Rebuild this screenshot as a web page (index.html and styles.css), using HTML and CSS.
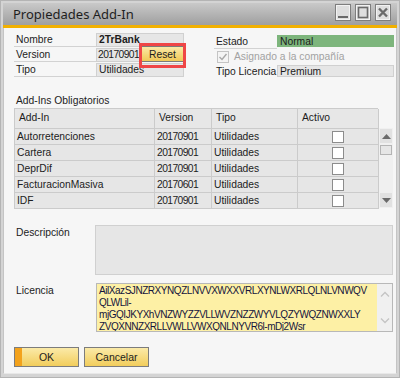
FILE: index.html
```html
<!DOCTYPE html>
<html lang="es">
<head>
    <meta charset="UTF-8">
    <meta name="viewport" content="width=device-width, initial-scale=1.0">
    <title>Propiedades Add-In</title>
    <link rel="stylesheet" href="styles.css">
</head>
<body>
    <div class="window">
        <div class="titlebar">
            <span class="title">Propiedades Add-In</span>
            <div class="win-buttons">
                <div class="win-btn"><svg width="14" height="15" viewBox="0 0 14 15"><rect x="2" y="11" width="10" height="2" fill="#6a6a6a"/></svg></div>
                <div class="win-btn"><svg width="14" height="15" viewBox="0 0 14 15"><rect x="2.5" y="2.5" width="9" height="10" fill="none" stroke="#6a6a6a" stroke-width="1.6"/></svg></div>
                <div class="win-btn"><svg width="14" height="15" viewBox="0 0 14 15"><path d="M3 3.5 L11 11.5 M11 3.5 L3 11.5" stroke="#6a6a6a" stroke-width="2.4"/></svg></div>
            </div>
        </div>

        <div class="content">
            <div class="head">
                <div class="head-left">
                    <div class="row">
                        <span class="lbl">Nombre</span>
                        <span class="field bold">2TrBank</span>
                    </div>
                    <div class="row">
                        <span class="lbl">Version</span>
                        <span class="field short num">20170901</span>
                        <button class="reset-btn">Reset</button>
                    </div>
                    <div class="row">
                        <span class="lbl">Tipo</span>
                        <span class="field">Utilidades</span>
                    </div>
                </div>
                <div class="head-right">
                    <div class="row">
                        <span class="lbl r">Estado</span>
                        <span class="field wide green">Normal</span>
                    </div>
                    <div class="row check-row">
                        <span class="checkbox disabled">
                            <svg width="10" height="10" viewBox="0 0 10 10"><path d="M1.5 5 L4 7.5 L8.5 2" fill="none" stroke="#a8a8a8" stroke-width="1.4"/></svg>
                        </span>
                        <span class="muted">Asignado a la compañía</span>
                    </div>
                    <div class="row">
                        <span class="lbl r plain">Tipo Licencia</span>
                        <span class="field wide">Premium</span>
                    </div>
                </div>
            </div>

            <div class="section-label">Add-Ins Obligatorios</div>

            <div class="grid-wrap">
                <div class="grid">
                    <div class="grid-row header">
                        <div class="cell">Add-In</div>
                        <div class="cell">Version</div>
                        <div class="cell">Tipo</div>
                        <div class="cell">Activo</div>
                    </div>
                    <div class="grid-row">
                        <div class="cell">Autorretenciones</div>
                        <div class="cell num">20170901</div>
                        <div class="cell">Utilidades</div>
                        <div class="cell center"><span class="box"></span></div>
                    </div>
                    <div class="grid-row">
                        <div class="cell">Cartera</div>
                        <div class="cell num">20170901</div>
                        <div class="cell">Utilidades</div>
                        <div class="cell center"><span class="box"></span></div>
                    </div>
                    <div class="grid-row">
                        <div class="cell">DeprDif</div>
                        <div class="cell num">20170901</div>
                        <div class="cell">Utilidades</div>
                        <div class="cell center"><span class="box"></span></div>
                    </div>
                    <div class="grid-row">
                        <div class="cell">FacturacionMasiva</div>
                        <div class="cell num">20170601</div>
                        <div class="cell">Utilidades</div>
                        <div class="cell center"><span class="box"></span></div>
                    </div>
                    <div class="grid-row">
                        <div class="cell">IDF</div>
                        <div class="cell num">20170901</div>
                        <div class="cell">Utilidades</div>
                        <div class="cell center"><span class="box"></span></div>
                    </div>
                </div>
                <div class="vscroll">
                    <div class="arrow-btn"><svg width="9" height="5" viewBox="0 0 9 5"><path d="M0 5 L4.5 0 L9 5 Z" fill="#6a6a6a"/></svg></div>
                    <div class="thumb"></div>
                    <div class="spacer"></div>
                    <div class="arrow-btn"><svg width="9" height="5" viewBox="0 0 9 5"><path d="M0 0 L4.5 5 L9 0 Z" fill="#6a6a6a"/></svg></div>
                </div>
            </div>

            <div class="desc-row">
                <span class="side-lbl">Descripción</span>
                <div class="desc-box"></div>
            </div>

            <div class="lic-row">
                <span class="side-lbl">Licencia</span>
                <div class="lic-box">
                    <div class="lic-text">AilXazSJNZRXYNQZLNVVXWXXVRLXYNLWXRLQLNLVNWQV<br>QLWLil-<br>mjGQIJKYXhVNZWYZZVLLWVZNZZWYVLQZYWQZNWXXLY<br>ZVQXNNZXRLLVWLLVWXQNLNYVR6l-mDj2Wsr</div>
                    <div class="lic-scroll">
                        <svg width="10" height="6" viewBox="0 0 10 6"><path d="M1 5.5 L5 1.5 L9 5.5" fill="none" stroke="#c4c4c4" stroke-width="1.3"/></svg>
                        <svg width="10" height="6" viewBox="0 0 10 6"><path d="M1 0.5 L5 4.5 L9 0.5" fill="none" stroke="#c4c4c4" stroke-width="1.3"/></svg>
                    </div>
                </div>
            </div>

            <div class="buttons">
                <button class="btn ok">OK</button>
                <button class="btn">Cancelar</button>
            </div>
        </div>
    </div>
</body>
</html>
```

FILE: styles.css
```css
* {
    box-sizing: border-box;
}

body {
    margin: 0;
    font-family: "Liberation Sans", Arial, sans-serif;
    font-size: 10.3px;
    color: #1c1c1c;
    background: #ffffff;
}

.window {
    width: 400px;
    height: 378px;
    border: 1px solid #b4b4b4;
    padding: 2px 2px 3px 2px;
    background: #d4d4d4;
    display: flex;
    flex-direction: column;
}

.titlebar {
    height: 25px;
    background: linear-gradient(#c9c9c9, #9f9f9f);
    border-bottom: 3px solid #f1b000;
    display: flex;
    justify-content: space-between;
    align-items: flex-start;
    padding: 0 6px 0 10px;
}

.title {
    font-family: "Noto Sans", "Open Sans", sans-serif;
    font-size: 13px;
    line-height: 22px;
    color: #1e1e1e;
}

.win-buttons {
    display: flex;
    gap: 4px;
    margin-top: 1px;
}

.win-btn {
    width: 16px;
    height: 17px;
    border: 1px solid #7e7e7e;
    background: #dedede;
    box-shadow: inset 0 0 0 1px #f2f2f2;
    display: flex;
    align-items: center;
    justify-content: center;
}

.content {
    flex: 1;
    background: #f6f6f6;
    padding: 5px 3px 0 10px;
    border-left: 1px solid #c4c4c4;
    border-right: 1px solid #c4c4c4;
    border-bottom: 1px solid #e8e8e8;
}

.num {
    letter-spacing: -0.6px;
}

/* top form */
.head {
    display: flex;
    gap: 30px;
}

.head-left {
    width: 170px;
}

.head-right {
    width: 180px;
    padding-top: 2px;
}

.row {
    display: flex;
    align-items: flex-start;
    height: 15px;
}

.lbl {
    width: 82px;
    height: 14px;
    line-height: 13px;
    padding-left: 2px;
    border-bottom: 1px solid #d2d2d2;
}

.lbl.r {
    width: 63px;
}

.lbl.plain {
    border-bottom: none;
}

.field {
    width: 88px;
    height: 14px;
    line-height: 12px;
    padding-left: 2px;
    background: #e6e6e6;
    border: 1px solid #d0d0d0;
    white-space: nowrap;
    overflow: hidden;
}

.field.bold {
    font-weight: bold;
}

.field.short {
    width: 45px;
    padding-left: 1px;
}

.field.wide {
    width: 117px;
    height: 12px;
    line-height: 11px;
}

.field.green {
    background: #7db57c;
    border-color: #7db57c;
}

.reset-btn {
    position: relative;
    width: 43px;
    height: 16px;
    margin-top: -2px;
    padding: 0;
    font-family: inherit;
    font-size: 10.3px;
    color: #1c1c1c;
    border: 1px solid #7a7a7a;
    background: linear-gradient(#fbe9a6, #f0c956);
}

.reset-btn::after {
    content: "";
    position: absolute;
    left: -3px;
    right: -3px;
    top: -4px;
    bottom: -7px;
    border: 3px solid #ef4646;
}

.check-row {
    padding-left: 3px;
    padding-top: 1px;
}

.checkbox {
    width: 12px;
    height: 12px;
    border: 1px solid #c4c4c4;
    background: #f4f4f4;
    display: flex;
    align-items: center;
    justify-content: center;
    margin-right: 5px;
}

.muted {
    color: #a2a2a2;
    line-height: 12px;
}

.section-label {
    margin-top: 14px;
    height: 14px;
    padding-left: 2px;
    line-height: 13px;
}

/* grid */
.grid-wrap {
    display: flex;
}

.grid {
    width: 364px;
    border-left: 1px solid #cbcbcb;
    border-top: 1px solid #cbcbcb;
}

.grid-row {
    display: grid;
    grid-template-columns: 140px 57px 86px 81px;
    height: 16px;
}

.grid-row.header {
    height: 20px;
}

.cell {
    background: #e6e6e6;
    border-right: 1px solid #cbcbcb;
    border-bottom: 1px solid #cbcbcb;
    padding-left: 2px;
    line-height: 15px;
    white-space: nowrap;
}

.header .cell {
    padding-left: 4px;
    line-height: 18px;
    background: #e7e7e7;
}

.cell.center {
    display: flex;
    justify-content: center;
    align-items: center;
    padding-left: 0;
}

.box {
    width: 12px;
    height: 12px;
    border: 1px solid #8c8c8c;
    background: #ffffff;
}

.vscroll {
    width: 16px;
    margin-top: 20px;
    height: 80px;
    margin-left: 1px;
    padding: 1px;
    background: #f0f0f0;
    display: flex;
    flex-direction: column;
}

.arrow-btn {
    height: 14px;
    background: #e1e1e1;
    display: flex;
    align-items: center;
    justify-content: center;
}

.thumb {
    height: 10px;
    margin-top: 2px;
    background: #e6e6e6;
    border: 1px solid #b4b4b4;
}

.spacer {
    flex: 1;
}

/* description / licence */
.desc-row {
    display: flex;
    margin-top: 16px;
}

.side-lbl {
    width: 81px;
    padding-left: 2px;
    padding-top: 2px;
}

.desc-box {
    width: 299px;
    height: 50px;
    background: #e6e6e6;
    border: 1px solid #d0d0d0;
}

.lic-row {
    display: flex;
    margin-top: 8px;
}

.lic-row .side-lbl {
    width: 82px;
}

.lic-box {
    width: 297px;
    height: 49px;
    border: 1px solid #b8b8b8;
    display: flex;
}

.lic-text {
    flex: 1;
    background: #fdf0a5;
    padding: 1px 0 0 2px;
    line-height: 12px;
    font-size: 10px;
    letter-spacing: -0.45px;
    color: #14143c;
    white-space: nowrap;
    overflow: hidden;
}

.lic-scroll {
    width: 15px;
    background: #f0f0f0;
    display: flex;
    flex-direction: column;
    justify-content: space-between;
    align-items: center;
    padding: 7px 0;
}

/* footer buttons */
.buttons {
    display: flex;
    gap: 5px;
    margin-top: 15px;
}

.btn {
    width: 65px;
    height: 20px;
    padding: 0;
    font-family: inherit;
    font-size: 10.5px;
    color: #1c1c1c;
    border: 1px solid #7c7c7c;
    background: linear-gradient(#fbeaa8, #f2cd5c);
}

.btn.ok {
    background: linear-gradient(90deg, #f3a21c 0, #f3a21c 7px, transparent 7px),
                linear-gradient(#fbeaa8, #f2cd5c);
}
```
